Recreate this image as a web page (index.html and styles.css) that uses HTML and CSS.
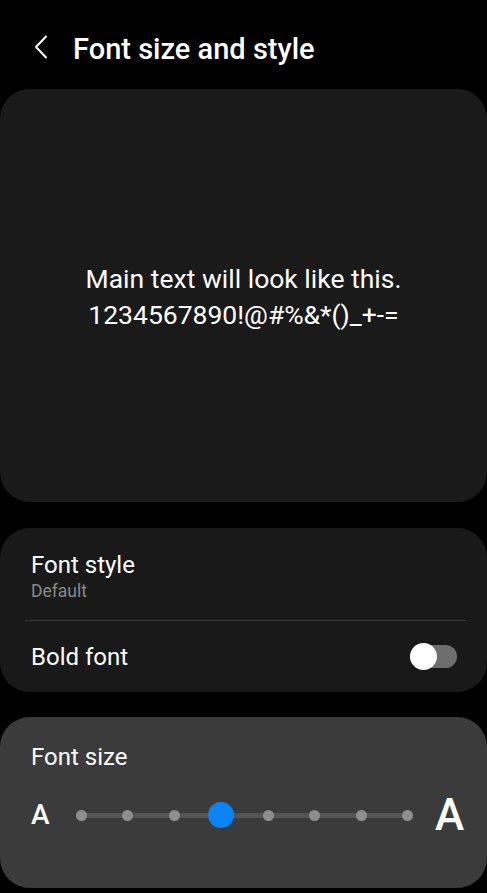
FILE: index.html
```html
<!DOCTYPE html>
<html>
<head>
<meta charset="utf-8">
<link rel="stylesheet" href="styles.css">
</head>
<body>
<div class="screen">
  <header class="header">
    <svg class="back" width="14" height="24" viewBox="0 0 14 24"><path d="M12 1.5 L2 12 L12 22.5" fill="none" stroke="#fff" stroke-width="2" stroke-linecap="round" stroke-linejoin="round"/></svg>
    <h1 class="title">Font size and style</h1>
  </header>
  <section class="card preview">
    <p class="preview-text">Main text will look like this.<br>1234567890!@#%&amp;*()_+-=</p>
  </section>
  <section class="card options">
    <div class="row row-style">
      <div class="label">Font style</div>
      <div class="sub">Default</div>
    </div>
    <div class="divider"></div>
    <div class="row row-bold">
      <div class="label">Bold font</div>
      <div class="toggle"><div class="thumb"></div></div>
    </div>
  </section>
  <section class="card size">
    <div class="label size-label">Font size</div>
    <div class="slider">
      <span class="a-small">A</span>
      <div class="track">
        <span class="dot"></span>
        <span class="dot"></span>
        <span class="dot"></span>
        <span class="dot active"></span>
        <span class="dot"></span>
        <span class="dot"></span>
        <span class="dot"></span>
        <span class="dot"></span>
      </div>
      <span class="a-large">A</span>
    </div>
  </section>
</div>
</body>
</html>
```
FILE: styles.css
```css
html, body {
  margin: 0;
  padding: 0;
  background: #000;
}
body {
  font-family: Roboto, "Noto Sans", "Liberation Sans", sans-serif;
  color: #fff;
  width: 487px;
  height: 893px;
  overflow: hidden;
}
.screen {
  display: flex;
  flex-direction: column;
}
.header {
  height: 89px;
  display: flex;
  align-items: center;
  padding-left: 34px;
  padding-top: 10px;
  box-sizing: border-box;
}
.back {
  display: block;
  margin-top: -6px;
}
.title {
  margin: 0 0 0 25px;
  font-size: 29px;
  font-weight: 500;
  letter-spacing: 0;
  line-height: 1;
}
.card {
  border-radius: 30px;
  box-sizing: border-box;
}
.preview {
  background: #1a1a1a;
  height: 413px;
  display: flex;
  align-items: center;
  justify-content: center;
}
.preview-text {
  margin: 0;
  text-align: center;
  font-size: 26.5px;
  line-height: 36px;
  padding-top: 2px;
}
.options {
  margin-top: 26px;
  background: #191919;
  height: 164px;
  padding: 0 21px 0 25px;
  display: flex;
  flex-direction: column;
}
.row-style {
  height: 92px;
  display: flex;
  flex-direction: column;
  justify-content: center;
  padding-left: 6px;
  padding-top: 4px;
  box-sizing: border-box;
}
.label {
  font-size: 24px;
  line-height: 28px;
}
.sub {
  font-size: 17.5px;
  line-height: 22px;
  color: #8a8a8a;
  margin-top: 1px;
}
.divider {
  height: 1px;
  background: #3a3a3a;
}
.row-bold {
  flex: 1;
  display: flex;
  align-items: center;
  justify-content: space-between;
  padding-left: 6px;
  padding-bottom: 0;
}
.toggle {
  width: 47px;
  height: 23px;
  border-radius: 12px;
  background: #6e6e6e;
  position: relative;
  margin-right: 9px;
}
.thumb {
  position: absolute;
  left: 0;
  top: -2px;
  width: 27px;
  height: 27px;
  border-radius: 50%;
  background: #fff;
}
.size {
  margin-top: 25px;
  background: #3b3b3b;
  height: 171px;
  padding: 26px 21px 0 31px;
  display: flex;
  flex-direction: column;
}
.slider {
  display: flex;
  align-items: center;
  margin-top: 26px;
  height: 36px;
}
.a-small {
  font-size: 28px;
  font-weight: 500;
  width: 19px;
  line-height: 1;
}
.a-large {
  font-size: 44px;
  font-weight: 500;
  line-height: 1;
  margin-left: 22px;
}
.track {
  margin-left: 26px;
  width: 337px;
  height: 5px;
  background: #555;
  display: flex;
  align-items: center;
  justify-content: space-between;
}
.dot {
  width: 11px;
  height: 11px;
  border-radius: 50%;
  background: #8e8e8e;
}
.dot.active {
  width: 26px;
  height: 26px;
  background: #0a84f5;
  margin: 0 -7px;
}
```
